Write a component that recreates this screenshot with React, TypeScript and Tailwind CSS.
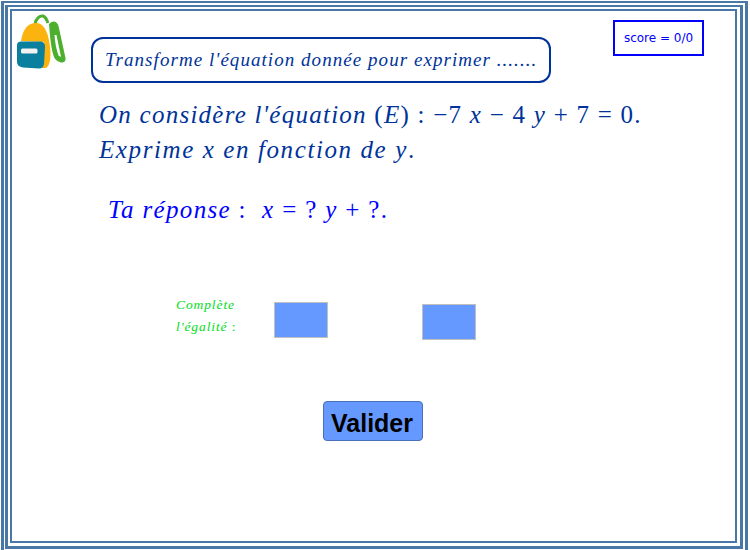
import React from 'react';

const mathFont = "font-['Liberation_Serif',serif] italic";

// coordinates follow the page pixels, shifted by the viewBox
const Backpack = () => (
  <svg width="52" height="56" viewBox="15 14 52 56" className="block">
    <path d="M35 24 C36 18 40 15.5 43 16 C46 17 47 20 48 23" fill="none" stroke="#4caf2e" strokeWidth="3" />
    <path
      d="M49 24 C53 20 57 21 58.5 26 L65.5 58 C66 61 64 62.5 62 62.5 C59 62.5 55.5 60 54.5 58 C51 50 50 36 49 24 Z M54.5 35 C55 43 56.5 50 58.5 55.5 L61 57 L56.5 35 Z"
      fill="#4caf2e"
      fillRule="evenodd"
    />
    <path d="M21 41 C23 30 27 23.5 35 23 C43 22.5 47.5 30 49.5 43 C51.5 55 50.5 66 46 68 L42 68 L44 42 Z" fill="#fbb40f" />
    <path
      d="M17 45 C17 42.5 19 41.5 21 41.5 L40 41.5 C44 41.5 45 44 45 47 L44 64 C43.5 67 42 68.5 39 68.5 L23 67.5 C19 67 17 65 17 62 Z"
      fill="#0a7f9e"
    />
    <rect x="21" y="48.5" width="16.5" height="5" rx="1.5" fill="#f2f2f2" />
  </svg>
);

export default function App() {
  return (
    <div className="w-[750px] h-[550px] overflow-hidden bg-white pl-[1px] pr-[2px] pt-[1px]">
      <div className="h-full border-[#4a78a6] border-l-[3px] border-r-[3px] border-t-[2px] pl-[1px] pr-[2px] pt-[2px] pb-[1px]">
        <div className="h-full border-[#4a78a6] border-l-[3px] border-r-[3px] border-t-[2px] border-b-[3px] pl-[2px] pr-[3px] pt-[2px] pb-[3px]">
          <div className="h-full border-2 border-[#4a78a6] bg-white pl-[3px] pt-[3px]">
            <div className="flex items-start">
              <Backpack />
              <div className="ml-[24px] mt-[23px] w-[460px] h-[46px] border-2 border-[#003399] rounded-[12px] flex items-center pl-[12px]">
                <span className={`${mathFont} text-[19px] tracking-[1.05px] text-[#003399] whitespace-nowrap`}>
                  Transforme l'équation donnée pour exprimer .......
                </span>
              </div>
              <div className="ml-[62px] mt-[6px] w-[91px] h-[36px] border-2 border-[#0000ff] flex items-center justify-center">
                <span className="font-['DejaVu_Sans',sans-serif] text-[12px] text-[#0000ff] whitespace-nowrap">score = 0/0</span>
              </div>
            </div>

            <div className={`${mathFont} ml-[84px] mt-[14px] text-[25px] leading-[35px] text-[#003399] whitespace-nowrap`}>
              <p className="tracking-[1.25px]">
                On considère l'équation <span className="not-italic">(</span>E<span className="not-italic">) : −7</span> x <span className="not-italic">− 4</span> y <span className="not-italic">+ 7 = 0.</span>
              </p>
              <p className="tracking-[1.6px]">
                Exprime x en fonction de y<span className="not-italic">.</span>
              </p>
            </div>

            <p className={`${mathFont} ml-[93px] mt-[25px] text-[25px] leading-[35px] tracking-[1.35px] text-[#0000ff] whitespace-nowrap`}>
              Ta réponse <span className="not-italic">:</span>&nbsp; x <span className="not-italic">= ?</span> y <span className="not-italic">+ ?.</span>
            </p>

            <div className="flex items-start ml-[161px] mt-[75px]">
              <div className={`${mathFont} w-[98px] text-[13.5px] leading-[22px] tracking-[0.9px] text-[#00dd22] -mt-[8px] whitespace-nowrap`}>
                <p>Complète</p>
                <p>l'égalité <span className="not-italic">:</span></p>
              </div>
              <div className="w-[54px] h-[36px] bg-[#6699ff] border border-[#c0c0c0]" />
              <div className="w-[54px] h-[36px] bg-[#6699ff] border border-[#c0c0c0] ml-[94px] mt-[2px]" />
            </div>

            <div className="flex ml-[308px] mt-[61px]">
              <button className="w-[100px] h-[40px] bg-[#6699ff] border border-[#4a70b8] rounded-[4px] pt-[3px] pr-[2px] font-['Liberation_Sans',sans-serif] font-bold text-[25px] text-black">
                Valider
              </button>
            </div>
          </div>
        </div>
      </div>
    </div>
  );
}
